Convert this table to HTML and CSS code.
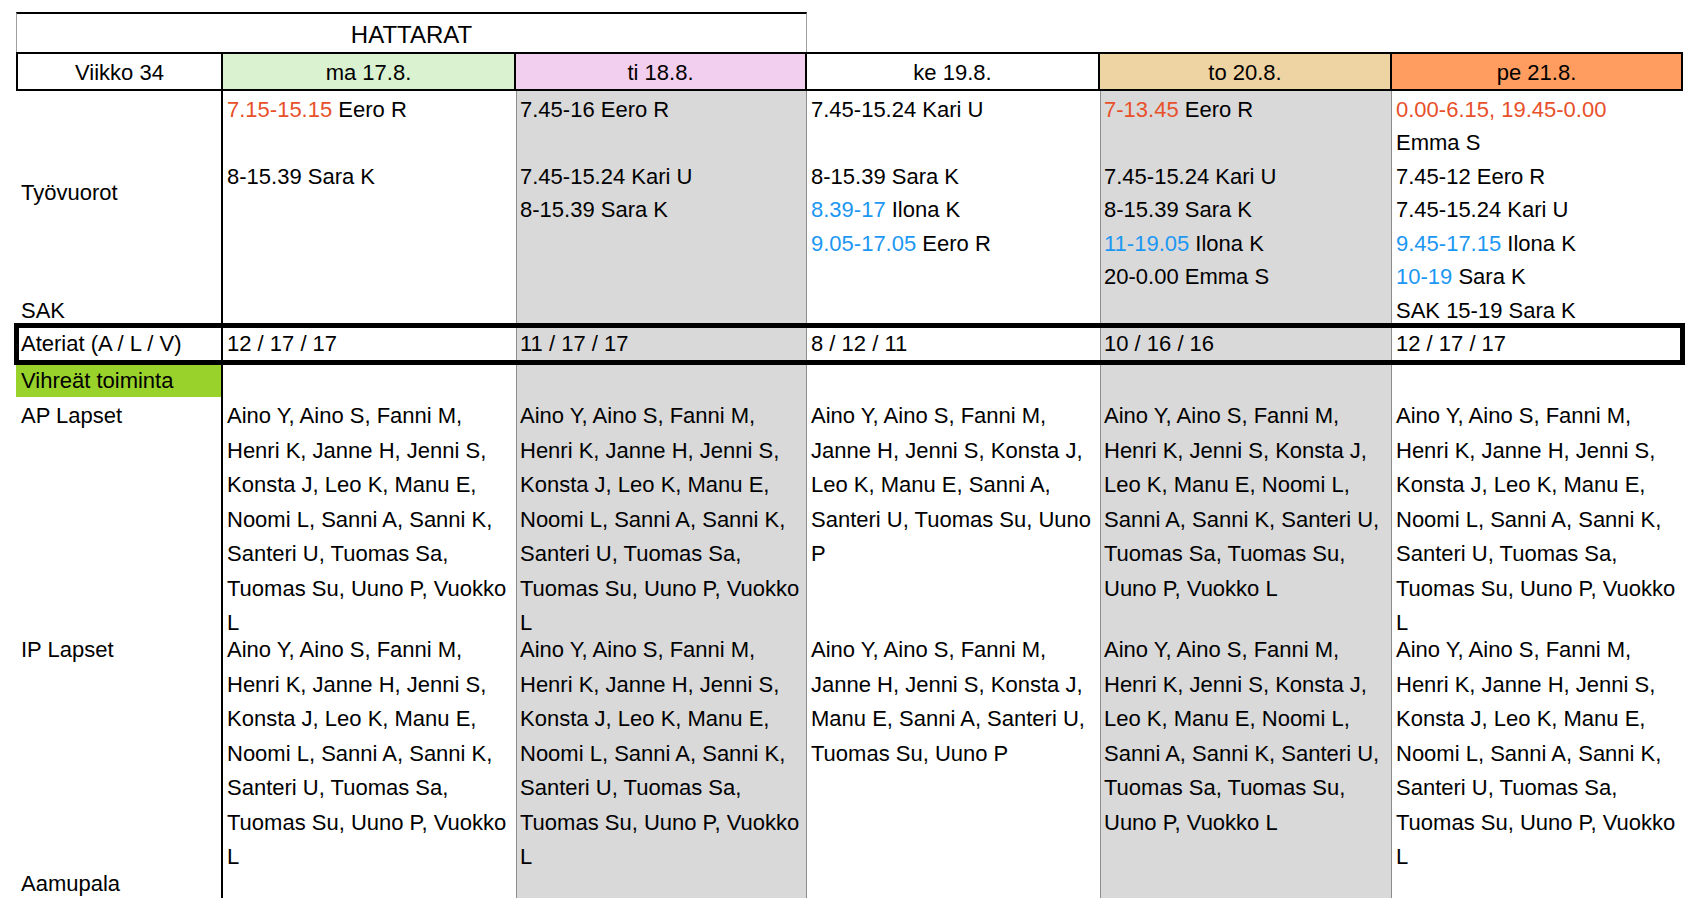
FILE: index.html
```html
<!DOCTYPE html>
<html lang="fi">
<head>
<meta charset="utf-8">
<title>HATTARAT – Viikko 34</title>
<link rel="stylesheet" href="styles.css">
</head>
<body>
<div class="sheet">
  <div class="row r-title">
    <div class="title">HATTARAT</div>
  </div>

  <div class="row r-head">
    <div class="hd">Viikko 34</div>
    <div class="hd mon">ma 17.8.</div>
    <div class="hd tue">ti 18.8.</div>
    <div class="hd wed">ke 19.8.</div>
    <div class="hd thu">to 20.8.</div>
    <div class="hd fri">pe 21.8.</div>
  </div>

  <div class="row r-shifts">
    <div class="cell lbl">
      <div class="merged">Työvuorot</div>
      <div class="ln">SAK</div>
    </div>
    <div class="cell">
      <div class="ln"><span class="red">7.15-15.15</span> Eero R</div>
      <div class="ln"></div>
      <div class="ln">8-15.39 Sara K</div>
    </div>
    <div class="cell gray">
      <div class="ln">7.45-16 Eero R</div>
      <div class="ln"></div>
      <div class="ln">7.45-15.24 Kari U</div>
      <div class="ln">8-15.39 Sara K</div>
    </div>
    <div class="cell">
      <div class="ln">7.45-15.24 Kari U</div>
      <div class="ln"></div>
      <div class="ln">8-15.39 Sara K</div>
      <div class="ln"><span class="blue">8.39-17</span> Ilona K</div>
      <div class="ln"><span class="blue">9.05-17.05</span> Eero R</div>
    </div>
    <div class="cell gray">
      <div class="ln"><span class="red">7-13.45</span> Eero R</div>
      <div class="ln"></div>
      <div class="ln">7.45-15.24 Kari U</div>
      <div class="ln">8-15.39 Sara K</div>
      <div class="ln"><span class="blue">11-19.05</span> Ilona K</div>
      <div class="ln">20-0.00 Emma S</div>
    </div>
    <div class="cell">
      <div class="ln"><span class="red">0.00-6.15, 19.45-0.00</span></div>
      <div class="ln">Emma S</div>
      <div class="ln">7.45-12 Eero R</div>
      <div class="ln">7.45-15.24 Kari U</div>
      <div class="ln"><span class="blue">9.45-17.15</span> Ilona K</div>
      <div class="ln"><span class="blue">10-19</span> Sara K</div>
      <div class="ln">SAK 15-19 Sara K</div>
    </div>
  </div>

  <div class="row r-meals">
    <div class="cell lbl">Ateriat (A / L / V)</div>
    <div class="cell">12 / 17 / 17</div>
    <div class="cell gray">11 / 17 / 17</div>
    <div class="cell">8 / 12 / 11</div>
    <div class="cell gray">10 / 16 / 16</div>
    <div class="cell">12 / 17 / 17</div>
  </div>

  <div class="row r-green">
    <div class="cell lbl green">Vihreät toiminta</div>
    <div class="cell"></div>
    <div class="cell gray"></div>
    <div class="cell"></div>
    <div class="cell gray"></div>
    <div class="cell"></div>
  </div>

  <div class="row r-kids">
    <div class="cell lbl wrap">AP Lapset</div>
    <div class="cell wrap">Aino Y, Aino S, Fanni M, Henri K, Janne H, Jenni S, Konsta J, Leo K, Manu E, Noomi L, Sanni A, Sanni K, Santeri U, Tuomas Sa, Tuomas Su, Uuno P, Vuokko L</div>
    <div class="cell gray wrap">Aino Y, Aino S, Fanni M, Henri K, Janne H, Jenni S, Konsta J, Leo K, Manu E, Noomi L, Sanni A, Sanni K, Santeri U, Tuomas Sa, Tuomas Su, Uuno P, Vuokko L</div>
    <div class="cell wrap">Aino Y, Aino S, Fanni M, Janne H, Jenni S, Konsta J, Leo K, Manu E, Sanni A, Santeri U, Tuomas Su, Uuno P</div>
    <div class="cell gray wrap">Aino Y, Aino S, Fanni M, Henri K, Jenni S, Konsta J, Leo K, Manu E, Noomi L, Sanni A, Sanni K, Santeri U, Tuomas Sa, Tuomas Su, Uuno P, Vuokko L</div>
    <div class="cell wrap">Aino Y, Aino S, Fanni M, Henri K, Janne H, Jenni S, Konsta J, Leo K, Manu E, Noomi L, Sanni A, Sanni K, Santeri U, Tuomas Sa, Tuomas Su, Uuno P, Vuokko L</div>
  </div>

  <div class="row r-kids">
    <div class="cell lbl wrap">IP Lapset</div>
    <div class="cell wrap">Aino Y, Aino S, Fanni M, Henri K, Janne H, Jenni S, Konsta J, Leo K, Manu E, Noomi L, Sanni A, Sanni K, Santeri U, Tuomas Sa, Tuomas Su, Uuno P, Vuokko L</div>
    <div class="cell gray wrap">Aino Y, Aino S, Fanni M, Henri K, Janne H, Jenni S, Konsta J, Leo K, Manu E, Noomi L, Sanni A, Sanni K, Santeri U, Tuomas Sa, Tuomas Su, Uuno P, Vuokko L</div>
    <div class="cell wrap">Aino Y, Aino S, Fanni M, Janne H, Jenni S, Konsta J, Manu E, Sanni A, Santeri U, Tuomas Su, Uuno P</div>
    <div class="cell gray wrap">Aino Y, Aino S, Fanni M, Henri K, Jenni S, Konsta J, Leo K, Manu E, Noomi L, Sanni A, Sanni K, Santeri U, Tuomas Sa, Tuomas Su, Uuno P, Vuokko L</div>
    <div class="cell wrap">Aino Y, Aino S, Fanni M, Henri K, Janne H, Jenni S, Konsta J, Leo K, Manu E, Noomi L, Sanni A, Sanni K, Santeri U, Tuomas Sa, Tuomas Su, Uuno P, Vuokko L</div>
  </div>

  <div class="row r-breakfast">
    <div class="cell lbl wrap">Aamupala</div>
    <div class="cell"></div>
    <div class="cell gray"></div>
    <div class="cell"></div>
    <div class="cell gray"></div>
    <div class="cell"></div>
  </div>
</div>
</body>
</html>
```

FILE: styles.css
```css
:root {
  --cols: 207px 293px 291px 293px 292px 291px;
  --line: 33.43px;
  --wrap-line: 34.5px;
}

* {
  box-sizing: border-box;
}

body {
  margin: 0;
  background: #ffffff;
  color: #000000;
  font-family: "Liberation Sans", Arial, sans-serif;
  font-size: 22px;
}

.sheet {
  margin: 12px 0 0 16px;
  width: 1667px;
  display: flex;
  flex-direction: column;
}

.row {
  display: grid;
  grid-template-columns: var(--cols);
  grid-template-rows: minmax(0, 1fr);
}

/* title row */
.r-title {
  height: 40px;
}

.title {
  grid-column: span 3;
  border-top: 2px solid #000;
  border-left: 1px solid #a0a0a0;
  border-right: 1px solid #a0a0a0;
  padding-top: 4px;
  display: flex;
  align-items: center;
  justify-content: center;
  font-size: 24px;
}

/* header row */
.r-head {
  height: 39px;
}

.hd {
  border-top: 2px solid #000;
  border-bottom: 2px solid #000;
  border-right: 2px solid #000;
  padding-top: 3px;
  display: flex;
  align-items: center;
  justify-content: center;
}

.hd:first-child {
  border-left: 2px solid #000;
}

.mon { background: #daf2d0; }
.tue { background: #f2ceef; }
.wed { background: #ffffff; }
.thu { background: #efd4a3; }
.fri { background: #fe9d5f; }

/* body cells */
.cell {
  padding-left: 4px;
  padding-right: 4px;
  white-space: nowrap;
}

.lbl {
  border-right: 2px solid #000;
  padding-left: 5px;
}

.gray {
  background: #d9d9d9;
  border-left: 1px solid #8c8c8c;
  border-right: 1px solid #8c8c8c;
  padding-left: 3px;
}

.green {
  background: #9ad22c;
}

.red { color: #e8502a; }
.blue { color: #1c97f2; }

/* shifts */
.r-shifts {
  height: 234px;
}

.r-shifts .cell {
  padding-top: 2px;
}

.ln {
  height: var(--line);
  line-height: var(--line);
}

.merged {
  height: calc(var(--line) * 6);
  display: flex;
  align-items: center;
}

/* meals */
.r-meals {
  height: 38px;
  line-height: 38px;
  position: relative;
  z-index: 1;
  outline: 5px solid #000;
  outline-offset: -3px;
}

/* green row */
.r-green {
  height: 34px;
  line-height: 35px;
}

/* kids lists */
.r-kids {
  height: 234px;
}

.wrap {
  white-space: normal;
  line-height: var(--wrap-line);
  padding-top: 2px;
}

.r-breakfast {
  height: 33px;
}
```
